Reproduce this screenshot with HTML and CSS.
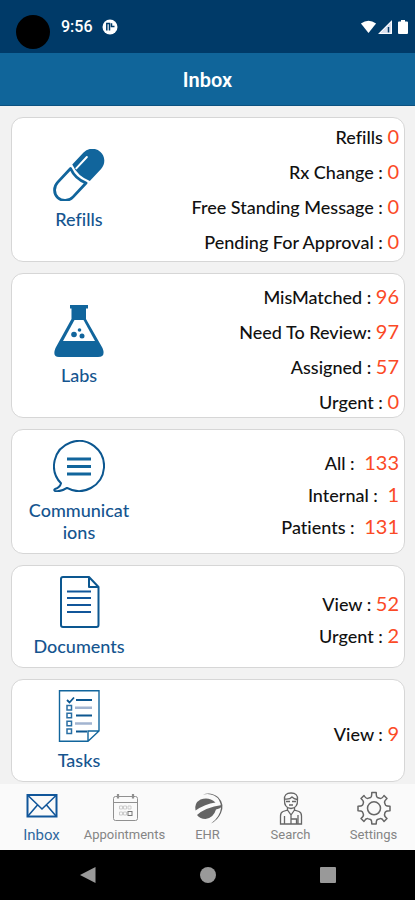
FILE: index.html
```html
<!DOCTYPE html>
<html lang="en">
<head>
<meta charset="utf-8">
<meta name="viewport" content="width=device-width, initial-scale=1">
<title>Inbox</title>
<link rel="stylesheet" href="styles.css">
</head>
<body>
<div class="status">
  <span class="camera"></span>
  <span class="time">9:56</span>
  <svg class="app-dot" viewBox="0 0 16 16" aria-hidden="true"><circle cx="8" cy="8" r="7.5" fill="#fff"/><path d="M4.800 11.500V4.500H7.500V11.500M9.500 4.200V7.500H12.500" fill="none" stroke="#003a68" stroke-width="1.500"/></svg>
  <span class="signals">
    <svg class="wifi" viewBox="0 0 18 14" aria-hidden="true"><path d="M1 3.2Q9-2.2 17 3.2L9 13.4z" fill="#fff"/></svg>
    <svg class="cell" viewBox="0 0 14 14" aria-hidden="true"><path d="M0 14L14 0V14z" fill="#d9dfee"/><path d="M10.500 7v5.500" stroke="#003a68" stroke-width="1.500"/><path d="M1.500 13.400L13.400 1.500V13.400z" fill="none" stroke="#fff"/></svg>
    <svg class="battery" viewBox="0 0 10 14" aria-hidden="true"><path d="M3 0h4v1.500h2a1 1 0 0 1 1 1V13a1 1 0 0 1-1 1H1a1 1 0 0 1-1-1V2.500a1 1 0 0 1 1-1h2z" fill="#fff"/></svg>
  </span>
</div>
<header class="bar"><h1>Inbox</h1></header>
<main class="cards">
  <a class="card tall" href="#refills">
    <span class="kind">
      <svg viewBox="0 0 52 52" aria-hidden="true"><g transform="rotate(43 26 26)"><path d="M14 23V6.500a12 12 0 0 1 24 0V23Q26 28 14 23z" fill="#11659c"/><path d="M15.400 27Q26 31.500 36.600 27V46a10.600 11 0 0 1-21.200 0z" fill="#fff" stroke="#11659c" stroke-width="2.800" stroke-linejoin="round"/><path d="M19.500 7.500V23" stroke="#fff" stroke-width="2" stroke-linecap="round"/></g></svg>
      <span class="name">Refills</span>
    </span>
    <span class="rows">
      <span class="row">Refills <b>0</b></span>
      <span class="row">Rx Change : <b>0</b></span>
      <span class="row">Free Standing Message : <b>0</b></span>
      <span class="row">Pending For Approval : <b>0</b></span>
    </span>
  </a>
  <a class="card tall" href="#labs">
    <span class="kind">
      <svg viewBox="0 0 52 52" aria-hidden="true"><path d="M17 0H35V3.500H33V14L49.500 43Q53 52 45 52H6Q-1 52 2.500 43L18.500 14V3.500H17z" fill="#11659c"/><path d="M21.500 15H30.500L42 36H10z" fill="#fff"/><circle cx="21" cy="29.500" r="2.800" fill="#11659c"/><circle cx="29" cy="31" r="2.500" fill="#11659c"/><circle cx="26.500" cy="25" r="1.800" fill="#11659c"/></svg>
      <span class="name">Labs</span>
    </span>
    <span class="rows low">
      <span class="row">MisMatched : <b>96</b></span>
      <span class="row">Need To Review: <b>97</b></span>
      <span class="row">Assigned : <b>57</b></span>
      <span class="row">Urgent : <b>0</b></span>
    </span>
  </a>
  <a class="card" href="#communications">
    <span class="kind">
      <svg viewBox="0 0 52 52" aria-hidden="true"><path d="M8 43.300A25 25 0 1 1 14 47.900Q8 52 2 51Q.5 50 2 49Q7 47.500 8 43.300z" fill="none" stroke="#0c5790" stroke-width="2" stroke-linejoin="round"/><path d="M14 19H38M14 26.500H38M14 34H38" stroke="#11659c" stroke-width="3"/></svg>
      <span class="name">Communications</span>
    </span>
    <span class="rows tight">
      <span class="row">All : <b class="far">133</b></span>
      <span class="row">Internal : <b class="far">1</b></span>
      <span class="row">Patients : <b class="far">131</b></span>
    </span>
  </a>
  <a class="card" href="#documents">
    <span class="kind">
      <svg viewBox="0 0 52 52" aria-hidden="true"><path d="M10 1H36L45.500 11V49a2 2 0 0 1-2 2H10a2 2 0 0 1-2-2V3a2 2 0 0 1 2-2zM36 1V11H45.500" fill="none" stroke="#0c5790" stroke-width="2" stroke-linejoin="round"/><path d="M14 15.500H38M14 22H38M14 29H38M14 36H38" stroke="#11569a" stroke-width="1.800"/></svg>
      <span class="name">Documents</span>
    </span>
    <span class="rows tight">
      <span class="row">View : <b>52</b></span>
      <span class="row">Urgent : <b>2</b></span>
    </span>
  </a>
  <a class="card" href="#tasks">
    <span class="kind">
      <svg viewBox="0 0 52 52" aria-hidden="true"><path d="M6.500 .7H46V41L35 51.300H6.500zM46 41H35V51.300" fill="none" stroke="#11659c" stroke-width="1.400"/><path d="M14 10l2.500 2.500L21 7.500M23 10H39M23 25.500H39M23 41.500H34" fill="none" stroke="#0c5790" stroke-width="1.800"/><path d="M22 17.700H39M22 33.500H39" stroke="#a2b4d0" stroke-width="2.600"/><path d="M14 15.500h4.500V20H14zM14 23.300h4.500v4.500H14zM14 31.200h4.500v4.500H14zM14 39h4.500v4.500H14z" fill="none" stroke="#2a6fa4" stroke-width="1.500"/></svg>
      <span class="name">Tasks</span>
    </span>
    <span class="rows tight">
      <span class="row">View : <b>9</b></span>
    </span>
  </a>
</main>
<nav class="tabs">
  <a class="tab active" href="#inbox">
    <svg viewBox="0 0 34 34" aria-hidden="true"><path d="M2.500 4H31.500V25.500H2.500z" fill="none" stroke="#11569a" stroke-width="2"/><path d="M3 4.500L17 18L31 4.500M3 25L12.500 14M31 25L21.500 14" fill="none" stroke="#11569a" stroke-width="1.600"/></svg>
    <span>Inbox</span>
  </a>
  <a class="tab" href="#appointments">
    <svg viewBox="0 0 34 34" aria-hidden="true" fill="none" stroke="#909090"><rect x="5.500" y="5.500" width="24" height="24" rx="2"/><path d="M5.500 11.500H29.500"/><path d="M10 3V7.500M25 3V7.500" stroke-width="2.200"/><path d="M11.500 15h3v3h-3zM15.500 15h3v3h-3zM20 15h3v3h-3zM11.500 21h3v3h-3zM15.500 21h3v3h-3z" stroke="#ccc"/><rect x="20" y="20.500" width="4" height="4" stroke="#777"/></svg>
    <span>Appointments</span>
  </a>
  <a class="tab" href="#ehr">
    <svg viewBox="0 0 34 34" aria-hidden="true"><path d="M12 3.500Q20 .5 27 6Q34 13 30 22Q27 29 20 32.500Q29 26 30 17Q30 8 23 4.500Q18 2 12 3.500z" fill="#666"/><path d="M4.500 19.500Q3 12 9.500 8.500Q18 5.500 24.500 11.500Q14 13 4.500 19.500z" fill="#646464"/><path d="M6 24Q14 16.500 31 14Q30.500 17.500 25 18.500Q22.500 27 14.500 28Q9 28 6 24z" fill="#646464"/></svg>
    <span>EHR</span>
  </a>
  <a class="tab" href="#search">
    <svg viewBox="0 0 34 34" aria-hidden="true" fill="none" stroke="#666" stroke-width="1.300"><path d="M10.500 8.500Q10 2 17 2T23.500 8.500Q24 17 17 17.500Q10 17 10.500 8.500zM11 8Q16 8.500 18 6Q20 8 23 8.500M12 10.500H16M18 10.500H22M15 14H19"/><path d="M13.500 16V19L9 20.500Q6.500 21.500 6.500 25V33H27.500V25Q27.500 21.500 25 20.500L20.500 19V16M10.500 25V33M24 24V33M13.500 19L17 24V33M20.500 19L17 24M17.500 28H22.500V33"/></svg>
    <span>Search</span>
  </a>
  <a class="tab" href="#settings">
    <svg viewBox="0 0 34 34" aria-hidden="true" fill="none" stroke="#666" stroke-width="1.500" stroke-linejoin="round"><path d="M14.800 1.500H19.200Q19.200 6 20.500 6.500T23.200 7.400Q25 8 27 4.500L30 7.500Q27 10 27.600 11.800T28.600 14.200Q29.500 15.300 33 15.300V19.700Q29.500 19.700 28.600 20.800T27.600 23.200Q27 25 30 27.500L27 30.500Q25 27 23.200 27.600T20.500 28.500Q19.200 29 19.200 33H14.800Q14.800 29 13.500 28.500T10.800 27.600Q9 27 7 30.500L4 27.500Q7 25 6.400 23.200T5.400 20.800Q4.500 19.700 1 19.700V15.300Q4.500 15.300 5.400 14.200T6.400 11.800Q7 10 4 7.500L7 4.500Q9 8 10.800 7.400T13.500 6.500Q14.800 6 14.800 1.500z"/><circle cx="17" cy="17.300" r="6.500"/></svg>
    <span>Settings</span>
  </a>
</nav>
<div class="system">
  <button aria-label="Back"><svg viewBox="0 0 18 18"><path d="M16.500 1V17L1 9z" fill="#999"/></svg></button>
  <button aria-label="Home"><svg viewBox="0 0 18 18"><circle cx="9" cy="9" r="8" fill="#999"/></svg></button>
  <button aria-label="Recents"><svg viewBox="0 0 18 18"><rect x="1" y="1" width="16" height="16" rx="1" fill="#999"/></svg></button>
</div>
</body>
</html>
```
FILE: styles.css
```css
* { box-sizing: border-box; }
body {
  margin: 0;
  min-height: 100vh;
  display: flex;
  flex-direction: column;
  background: #f2f2f2;
  font-family: Lato, "Open Sans", sans-serif;
  color: #111;
}
svg { display: block; flex: none; }
a { color: inherit; text-decoration: none; }
.status {
  display: flex;
  align-items: center;
  height: 53px;
  padding: 1px 7px 0 16px;
  background: #003a68;
  color: #fff;
}
.camera { width: 34px; height: 34px; margin: 10px 11px 0 0; border-radius: 50%; background: #000; }
.time { font: 500 16px/20px Roboto, sans-serif; }
.app-dot { width: 16px; height: 16px; margin-left: 9px; }
.signals { display: flex; margin-left: auto; gap: 1px; }
.wifi { width: 17px; height: 14px; }
.cell { width: 14px; height: 14px; }
.battery { width: 10px; height: 14px; margin-left: 5px; }
.bar {
  display: flex;
  align-items: center;
  justify-content: center;
  height: 53px;
  padding-top: 2px;
  background: #10659a;
  color: #fff;
  border-bottom: 1px solid #0c5280;
}
.bar h1 { margin: 0; font: 600 20px/24px Roboto, sans-serif; }
.cards {
  flex: 1;
  display: flex;
  flex-direction: column;
  gap: 11px;
  padding: 11px 10px 2px 11px;
}
.card {
  display: flex;
  align-items: center;
  justify-content: space-between;
  padding: 10px 5px 10px 15px;
  border: 1px solid #d6d6d6;
  border-radius: 12px;
  background: #fff;
}
.card.tall { padding-top: 0; padding-bottom: 0; }
.kind { display: flex; flex-direction: column; align-items: center; gap: 7px; width: 104px; }
.kind svg { width: 52px; height: 52px; }
.name {
  max-width: 100%;
  overflow-wrap: anywhere;
  text-align: center;
  font-size: 18px;
  line-height: 22px;
  font-weight: 500;
  font-variant-ligatures: none;
  color: #15558f;
}
.rows { display: flex; flex-direction: column; margin: 2px 0 1px; text-align: right; }
.rows.low { margin: 6px 0 -3px; }
.rows.tight { margin: 7px 0 0; }
.row {
  font-size: 18px;
  line-height: 35px;
  font-weight: 500;
  font-variant-ligatures: none;
  white-space: nowrap;
}
.tight .row { line-height: 32px; }
.row b { font-size: 20px; line-height: 24px; font-weight: 400; color: #fb4a26; }
.row .far { margin-left: 5px; }
.tabs {
  display: grid;
  grid-template-columns: repeat(5, 1fr);
  height: 66px;
  background: #fafafa;
}
.tab {
  display: flex;
  flex-direction: column;
  align-items: center;
  padding-top: 7px;
  gap: 2px;
  font: 400 13px/16px Roboto, sans-serif;
  color: #858585;
}
.tab svg { width: 34px; height: 34px; }
.tab.active { font-size: 15px; color: #2f689f; }
.system {
  display: flex;
  justify-content: center;
  align-items: center;
  gap: 102px;
  height: 50px;
  background: #000;
}
.system button { padding: 0; border: 0; background: none; }
.system svg { width: 18px; height: 18px; }
```
